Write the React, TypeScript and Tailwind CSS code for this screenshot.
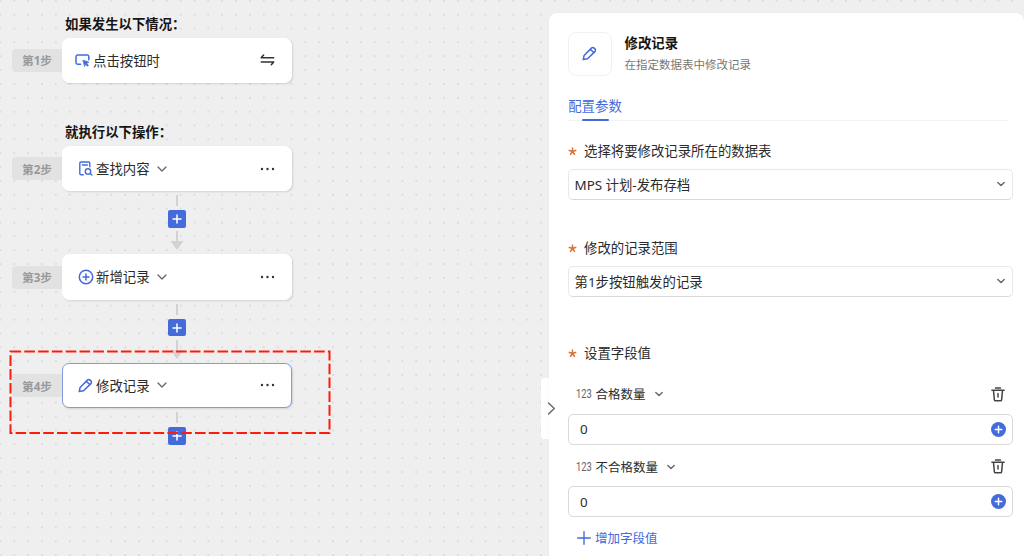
import type { ReactNode } from "react";

const iconProps = {
  fill: "none",
  stroke: "currentColor",
  strokeLinecap: "round",
  strokeLinejoin: "round",
} as const;

function ButtonClickIcon() {
  return (
    <svg width="15" height="13" viewBox="0 0 15 13" {...iconProps} strokeWidth="1.5">
      <path d="M5.600 10.200H2.600A1.600 1.600 0 0 1 1 8.600V2.600A1.600 1.600 0 0 1 2.600 1h9.600A1.600 1.600 0 0 1 13.800 2.600v3.200" />
      <path d="M8.200 6.300l5.600 1.900-2.200 1.100 1.800 2-.9.900-2-1.900-.8 1.900z" fill="currentColor" strokeWidth=".8" />
    </svg>
  );
}

function SearchDocIcon() {
  return (
    <svg width="15" height="15" viewBox="0 0 15 15" {...iconProps} strokeWidth="1.4">
      <path d="M5.300 13.800H3A1.200 1.200 0 0 1 1.800 12.600V2.200A1.200 1.200 0 0 1 3 1h7.600A1.200 1.200 0 0 1 11.800 2.200v3.600M4.500 4h4.800" />
      <circle cx="10" cy="10.400" r="2.700" />
      <path d="M12.200 12.500l1.700 1.500" />
    </svg>
  );
}

function AddRecordIcon() {
  return (
    <svg width="16" height="16" viewBox="0 0 16 16" {...iconProps} strokeWidth="1.5" className="shrink-0">
      <circle cx="8" cy="8" r="6.700" />
      <path d="M8 5v6M5 8h6" />
    </svg>
  );
}

function PencilIcon() {
  return (
    <svg width="15" height="15" viewBox="0 0 15 15" {...iconProps} strokeWidth="1.500">
      <path d="M1.200 13.600l.9-4.100 7.300-7.400a1.900 1.900 0 0 1 2.700 0l.8.800a1.900 1.900 0 0 1 0 2.700l-7.400 7.200zM8.300 3.300l3.600 3.500" />
    </svg>
  );
}

function Chevron({ size = 10, className = "" }: { size?: number; className?: string }) {
  return (
    <svg width={size} height={size} viewBox="0 0 10 10" {...iconProps} strokeWidth="1.300" className={className}>
      <path d="M1 3l4 4 4-4" />
    </svg>
  );
}

function TrashIcon() {
  return (
    <svg width="14" height="15" viewBox="0 0 14 15" {...iconProps} strokeWidth="1.500">
      <path d="M4.500 1h5M.9 3.300h12.200M2.500 3.500l.9 9.400a1 1 0 0 0 1 .9h5.200a1 1 0 0 0 1-.9l.9-9.400M7 6.500v3.400" />
    </svg>
  );
}

function SwapIcon() {
  return (
    <svg width="15" height="12" viewBox="0 0 15 12" {...iconProps} strokeWidth="1.500">
      <path d="M13.700 3.800H1.200L3.600 1M1.200 7.900h12.500l-2.400 2.800" />
    </svg>
  );
}

function MoreIcon() {
  return (
    <svg width="15" height="4" viewBox="0 0 15 4" fill="currentColor">
      <circle cx="2" cy="2" r="1.200" />
      <circle cx="7.500" cy="2" r="1.200" />
      <circle cx="13" cy="2" r="1.200" />
    </svg>
  );
}

function Step({ no, icon, title, active, trigger }: {
  no: number;
  icon: ReactNode;
  title: string;
  active?: boolean;
  trigger?: boolean;
}) {
  return (
    <div className="flex h-[45.400px] w-[280px] items-center">
      <div className="flex h-[23px] w-[50px] items-center justify-center rounded-l bg-[#e2e2e2] pt-[2px] text-[11.700px] font-bold text-[#999]">
        第{no}步
      </div>
      <div
        className={`flex h-full w-[230px] items-center rounded-[7px] border bg-white shadow-[1px_1px_2px_rgba(0,0,0,0.12)] ${
          active ? "border-[#839bdc]" : "border-white"
        } ${trigger ? "pl-[12px]" : "pl-[15px]"} pr-4`}
      >
        <span className="flex w-[15px] shrink-0 justify-center text-[#456bdb]">{icon}</span>
        <span className="ml-[3px] pt-[2px] text-[13.400px] text-[#2b2b2b]">{title}</span>
        {!trigger && <Chevron className="ml-[7px] text-[#666]" />}
        <span className="ml-auto text-[#333]">{trigger ? <SwapIcon /> : <MoreIcon />}</span>
      </div>
    </div>
  );
}

function Connector({ last }: { last?: boolean }) {
  return (
    <div className="ml-[50px] flex h-[63px] w-[230px] flex-col items-center pt-[4px]">
      <div className="h-[11px] w-[1.500px] bg-[#d2d2d2]" />
      <button type="button" aria-label="添加步骤" className="mt-[4px] flex size-[17.500px] items-center justify-center rounded-[2px] bg-[#456bdb] text-white">
        <svg width="10" height="10" viewBox="0 0 10 10" {...iconProps} strokeWidth="1.500">
          <path d="M5 1v8M1 5h8" />
        </svg>
      </button>
      {!last && (
        <svg width="14" height="19" viewBox="0 0 14 19" fill="#d2d2d2" className="mt-[3.500px] -ml-[1px]">
          <path d="M6 0h2v10h5.500L7 19 .5 10H6z" />
        </svg>
      )}
    </div>
  );
}

function Label({ children }: { children: ReactNode }) {
  return (
    <div className="flex h-5 items-center text-[13.400px] text-[#2b2b2b]">
      <svg width="9" height="9" viewBox="0 0 9 9" fill="none" stroke="#d9733a" strokeWidth="1.500" className="mr-[7px]">
        <path d="M4.500 4.500V.5M4.500 4.500l3.800-1.200M4.500 4.500l2.300 3.300M4.500 4.500L2.200 7.800M4.500 4.500L.7 3.300" />
      </svg>
      <span className="pt-[1px]">{children}</span>
    </div>
  );
}

function Select({ value }: { value: string }) {
  return (
    <div className="flex h-[31px] w-[445px] items-center justify-between rounded-[5px] border border-[#e8e8e8] border-b-[#d8d8d8] bg-white pr-[7px] pl-[5.500px] text-[13.400px] text-[#2b2b2b]">
      <span className="pt-[3px]">{value}</span>
      <Chevron size={8} className="stroke-[1.700] text-[#666]" />
    </div>
  );
}

function FieldValue({ name }: { name: string }) {
  return (
    <div className="w-[445px]">
      <div className="flex h-[39px] items-center pr-[8px] pl-[8px]">
        <span className="w-[16px] font-['Roboto',sans-serif] text-[12px] leading-[18px] text-[#666]">
          <span className="inline-block origin-left scale-x-[0.780]">123</span>
        </span>
        <span className="ml-[3.500px] pt-[3px] text-[12.500px] text-[#2b2b2b]">{name}</span>
        <Chevron size={8} className="ml-[9px] stroke-[1.700] text-[#666]" />
        <span className="ml-auto text-[#444]"><TrashIcon /></span>
      </div>
      <div className="flex h-[31px] items-center justify-between rounded-[5px] border border-[#d9d9d9] pr-[6.500px] pl-[11px] text-[13.400px] text-[#2b2b2b]">
        <span className="pt-[2px]">0</span>
        <svg width="15" height="15" viewBox="0 0 15 15">
          <circle cx="7.500" cy="7.500" r="7.500" fill="#456bdb" />
          <path d="M7.500 4.200v6.600M4.200 7.500h6.600" stroke="#fff" strokeWidth="1.500" strokeLinecap="round" />
        </svg>
      </div>
    </div>
  );
}

function Dots() {
  return (
    <svg className="absolute inset-0 size-full">
      <defs>
        <pattern id="dots" x="-6.500" y="-6.200" width="13.860" height="13.860" patternUnits="userSpaceOnUse">
          <circle cx="6.930" cy="6.930" r="0.900" fill="#d6d6d6" />
        </pattern>
      </defs>
      <rect width="100%" height="100%" fill="url(#dots)" />
    </svg>
  );
}

export default function App() {
  return (
    <div className="relative flex h-[556px] w-[1024px] overflow-hidden bg-[#efefef] font-['Noto_Sans','Noto_Sans_CJK_SC',sans-serif] leading-none whitespace-nowrap">
      <Dots />

      <main className="relative w-[549px] shrink-0 pl-[12px]">
        <h2 className="flex h-[37.600px] items-end pb-[6px] pl-[53px] text-[13.400px] font-bold text-[#151515]">如果发生以下情况：</h2>
        <Step no={1} icon={<ButtonClickIcon />} title="点击按钮时" trigger />
        <h2 className="flex h-[63px] items-end pb-[7px] pl-[53px] text-[13.400px] font-bold text-[#151515]">就执行以下操作：</h2>
        <Step no={2} icon={<SearchDocIcon />} title="查找内容" />
        <Connector />
        <Step no={3} icon={<AddRecordIcon />} title="新增记录" />
        <Connector />
        <Step no={4} icon={<PencilIcon />} title="修改记录" active />
        <Connector last />
        <svg className="pointer-events-none absolute top-[350px] left-[9px]" width="322" height="85" fill="none">
          <rect x="1.500" y="1.500" width="319" height="81.500" stroke="#ff1a0c" strokeWidth="2" strokeDasharray="10.600 3.200" />
        </svg>
        <button type="button" aria-label="收起面板" className="absolute top-[378px] right-0 h-[61px] w-[8px] rounded-l bg-white" />
      </main>

      <aside className="relative mt-[13px] w-[475px] rounded-t-lg bg-white pl-[19px] shadow-[0_0_3px_rgba(0,0,0,0.04)]">
        <svg className="absolute top-[389px] left-[-2.500px] text-[#666]" width="9" height="13" viewBox="0 0 9 13" {...iconProps} strokeWidth="1.400">
          <path d="M1.500 1l5.800 5.500L1.500 12" />
        </svg>
        <header className="flex pt-[19px]">
          <div className="flex size-[43.500px] items-center justify-center rounded-lg border border-[#f1f1f1] text-[#456bdb]">
            <PencilIcon />
          </div>
          <div className="ml-[13px] flex flex-col pt-[5px]">
            <h1 className="text-[13.400px] font-bold text-[#151515]">修改记录</h1>
            <p className="mt-[9px] text-[11.500px] text-[#777]">在指定数据表中修改记录</p>
          </div>
        </header>

        <div className="mt-[21px] h-[24px] w-[440px] border-b border-[#f3f3f3]">
          <div className="flex h-[24px] w-[54px] flex-col items-center justify-between text-[13.400px] text-[#456bdb]">
            <span className="pt-[3px]">配置参数</span>
            <span className="h-[2px] w-[27px] rounded-full bg-[#456bdb]" />
          </div>
        </div>

        <div className="mt-[21px]">
          <Label>选择将要修改记录所在的数据表</Label>
          <div className="mt-[7px]"><Select value="MPS 计划-发布存档" /></div>
        </div>
        <div className="mt-[39px]">
          <Label>修改的记录范围</Label>
          <div className="mt-[7px]"><Select value="第1步按钮触发的记录" /></div>
        </div>
        <div className="mt-[47px]">
          <Label>设置字段值</Label>
          <div className="mt-[11px] flex flex-col gap-[2.500px]">
            <FieldValue name="合格数量" />
            <FieldValue name="不合格数量" />
          </div>
        </div>
        <button type="button" className="mt-[14px] flex items-center gap-[4px] pl-[9px] text-[12.500px] text-[#456bdb]">
          <svg width="14" height="14" viewBox="0 0 14 14" {...iconProps} strokeWidth="1.400">
            <path d="M7 .7v12.600M.7 7h12.600" />
          </svg>
          <span className="pt-[2px]">增加字段值</span>
        </button>
      </aside>
    </div>
  );
}
